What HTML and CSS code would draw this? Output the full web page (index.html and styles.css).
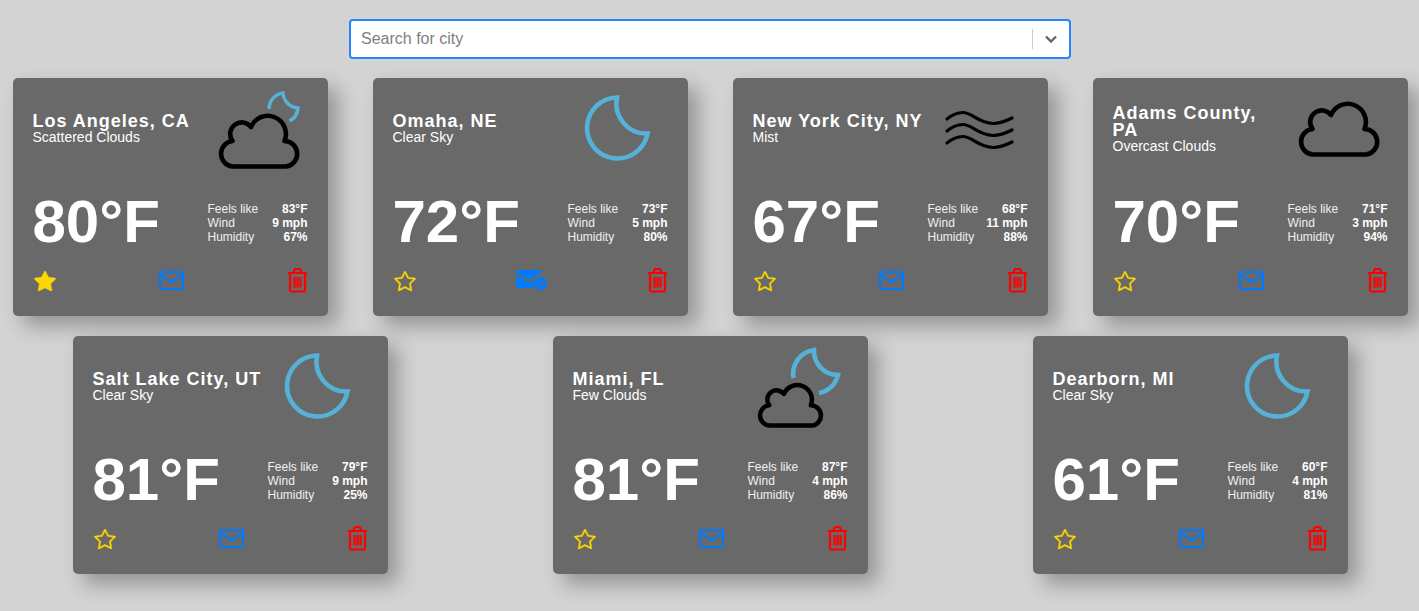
FILE: index.html
```html
<!DOCTYPE html>
<html lang="en">
<head>
  <meta charset="UTF-8" />
  <meta name="viewport" content="width=device-width, initial-scale=1.0" />
  <title>Weather Dashboard</title>
  <link rel="stylesheet" href="styles.css">
</head>
<body>

  <svg class="defs" width="0" height="0" aria-hidden="true">
    <defs>
      <path id="cloud" d="M17 54.500H70A12.800 12.800 0 0 0 68.500 29A17.500 17.500 0 0 0 35 15A10.500 10.500 0 0 0 16.500 29A12.800 12.800 0 0 0 17 54.500Z" />
      <path id="moon" d="M34 4A30.500 30.500 0 1 0 64.500 40A30 30 0 0 1 34 4Z" />
      <path id="star-fill" d="M3.612 15.443c-.386.198-.824-.149-.746-.592l.83-4.73L.173 6.765c-.329-.314-.158-.888.283-.95l4.898-.696L7.538.792c.197-.39.73-.39.927 0l2.184 4.327 4.898.696c.441.062.612.636.282.95l-3.522 3.356.83 4.73c.078.443-.36.79-.746.592L8 13.187l-4.389 2.256z" />
      <path id="star" d="M2.866 14.85c-.078.444.36.791.746.593l4.39-2.256 4.389 2.256c.386.198.824-.149.746-.592l-.83-4.73 3.522-3.356c.33-.314.16-.888-.282-.95l-4.898-.696L8.465.792a.513.513 0 0 0-.927 0L5.354 5.12l-4.898.696c-.441.062-.612.636-.283.95l3.523 3.356-.83 4.73zm4.905-2.767-3.686 1.894.694-3.957a.565.565 0 0 0-.163-.505L1.71 6.745l4.052-.576a.525.525 0 0 0 .393-.288L8 2.223l1.847 3.658a.525.525 0 0 0 .393.288l4.052.575-2.906 2.77a.565.565 0 0 0-.163.506l.694 3.957-3.686-1.894a.503.503 0 0 0-.461 0z" />
      <g id="mail">
        <rect x="1" y="1" width="23" height="17" rx="2" />
        <path d="M2 4L12.500 11.500L23 4" />
      </g>
      <g id="trash">
        <path d="M1 5H20M6.500 5L7.500 2A1.500 1.500 0 0 1 9 1H12A1.500 1.500 0 0 1 13.500 2L14.500 5" />
        <path d="M3 5V21.500A2 2 0 0 0 5 23.500H16A2 2 0 0 0 18 21.500V5" />
        <path d="M7.500 9V19.500M10.500 9V19.500M13.500 9V19.500" />
      </g>
    </defs>
  </svg>

  <div class="search">
    <span class="search-text">Search for city</span>
    <span class="search-sep"></span>
    <svg class="search-arrow" width="14" height="9" viewBox="0 0 14 9"><path d="M2 1.500L7 6.500L12 1.500" /></svg>
  </div>

  <div class="cards">

    <div class="card">
      <div class="card-top">
        <div class="place">
          <h2>Los Angeles, CA</h2>
          <p>Scattered Clouds</p>
        </div>
        <svg class="weather" viewBox="0 0 100 84">
          <path class="sky thin" d="M61 21A16 16 0 0 1 75 5A16 16 0 0 0 90 20A16 16 0 0 1 81.500 33" />
          <use class="dark" href="#cloud" transform="translate(8 24)" />
        </svg>
      </div>
      <div class="card-mid">
        <div class="temp">80°F</div>
        <dl class="stats">
          <dt>Feels like</dt><dd>83°F</dd>
          <dt>Wind</dt><dd>9 mph</dd>
          <dt>Humidity</dt><dd>67%</dd>
        </dl>
      </div>
      <div class="card-actions">
        <svg class="act-star" viewBox="-1 -1 18 18"><use href="#star-fill" /></svg>
        <svg class="act-mail" viewBox="0 0 25 19"><use href="#mail" /></svg>
        <svg class="act-trash" viewBox="0 0 21 25"><use href="#trash" /></svg>
      </div>
    </div>

    <div class="card">
      <div class="card-top">
        <div class="place">
          <h2>Omaha, NE</h2>
          <p>Clear Sky</p>
        </div>
        <svg class="weather" viewBox="0 0 100 84">
          <use class="sky" href="#moon" transform="translate(15 5.500)" />
        </svg>
      </div>
      <div class="card-mid">
        <div class="temp">72°F</div>
        <dl class="stats">
          <dt>Feels like</dt><dd>73°F</dd>
          <dt>Wind</dt><dd>5 mph</dd>
          <dt>Humidity</dt><dd>80%</dd>
        </dl>
      </div>
      <div class="card-actions">
        <svg class="act-star" viewBox="-1 -1 18 18"><use href="#star" /></svg>
        <svg class="act-sent" viewBox="0 0 32 21">
          <path class="sent-body" d="M2 0H23A2 2 0 0 1 25 2V2.500L12.500 10L0 2.500V2A2 2 0 0 1 2 0ZM0 5L12.500 12.500L25 5V17A1 1 0 0 1 24 18H2A2 2 0 0 1 0 16Z" />
          <circle class="sent-ring" cx="24.500" cy="13.500" r="7" />
          <path class="sent-check" d="M21.500 13.500L23.700 15.700L27.500 11.500" />
        </svg>
        <svg class="act-trash" viewBox="0 0 21 25"><use href="#trash" /></svg>
      </div>
    </div>

    <div class="card">
      <div class="card-top">
        <div class="place">
          <h2>New York City, NY</h2>
          <p>Mist</p>
        </div>
        <svg class="weather" viewBox="0 0 100 84">
          <g class="waves">
            <path d="M19 31C25 26 30 24.500 35 24.500C44 24.500 50 35 65 35.500C72 35.500 78 33 84 30" />
            <path d="M19 43C25 38 30 36.500 35 36.500C44 36.500 50 47 65 47.500C72 47.500 78 45 84 42" />
            <path d="M19 55C25 50 30 48.500 35 48.500C44 48.500 50 59 65 59.500C72 59.500 78 57 84 54" />
          </g>
        </svg>
      </div>
      <div class="card-mid">
        <div class="temp">67°F</div>
        <dl class="stats">
          <dt>Feels like</dt><dd>68°F</dd>
          <dt>Wind</dt><dd>11 mph</dd>
          <dt>Humidity</dt><dd>88%</dd>
        </dl>
      </div>
      <div class="card-actions">
        <svg class="act-star" viewBox="-1 -1 18 18"><use href="#star" /></svg>
        <svg class="act-mail" viewBox="0 0 25 19"><use href="#mail" /></svg>
        <svg class="act-trash" viewBox="0 0 21 25"><use href="#trash" /></svg>
      </div>
    </div>

    <div class="card">
      <div class="card-top">
        <div class="place">
          <h2>Adams County, PA</h2>
          <p>Overcast Clouds</p>
        </div>
        <svg class="weather" viewBox="0 0 100 84">
          <use class="dark" href="#cloud" transform="translate(8 12)" />
        </svg>
      </div>
      <div class="card-mid">
        <div class="temp">70°F</div>
        <dl class="stats">
          <dt>Feels like</dt><dd>71°F</dd>
          <dt>Wind</dt><dd>3 mph</dd>
          <dt>Humidity</dt><dd>94%</dd>
        </dl>
      </div>
      <div class="card-actions">
        <svg class="act-star" viewBox="-1 -1 18 18"><use href="#star" /></svg>
        <svg class="act-mail" viewBox="0 0 25 19"><use href="#mail" /></svg>
        <svg class="act-trash" viewBox="0 0 21 25"><use href="#trash" /></svg>
      </div>
    </div>

    <div class="card">
      <div class="card-top">
        <div class="place">
          <h2>Salt Lake City, UT</h2>
          <p>Clear Sky</p>
        </div>
        <svg class="weather" viewBox="0 0 100 84">
          <use class="sky" href="#moon" transform="translate(15 5.500)" />
        </svg>
      </div>
      <div class="card-mid">
        <div class="temp">81°F</div>
        <dl class="stats">
          <dt>Feels like</dt><dd>79°F</dd>
          <dt>Wind</dt><dd>9 mph</dd>
          <dt>Humidity</dt><dd>25%</dd>
        </dl>
      </div>
      <div class="card-actions">
        <svg class="act-star" viewBox="-1 -1 18 18"><use href="#star" /></svg>
        <svg class="act-mail" viewBox="0 0 25 19"><use href="#mail" /></svg>
        <svg class="act-trash" viewBox="0 0 21 25"><use href="#trash" /></svg>
      </div>
    </div>

    <div class="card">
      <div class="card-top">
        <div class="place">
          <h2>Miami, FL</h2>
          <p>Few Clouds</p>
        </div>
        <svg class="weather" viewBox="0 0 100 84">
          <path class="sky" d="M45.500 32A24 24 0 0 1 66 4A24 24 0 0 0 90 29A24 24 0 0 1 71 47" />
          <use class="dark small" href="#cloud" transform="translate(8 36) scale(.8)" />
        </svg>
      </div>
      <div class="card-mid">
        <div class="temp">81°F</div>
        <dl class="stats">
          <dt>Feels like</dt><dd>87°F</dd>
          <dt>Wind</dt><dd>4 mph</dd>
          <dt>Humidity</dt><dd>86%</dd>
        </dl>
      </div>
      <div class="card-actions">
        <svg class="act-star" viewBox="-1 -1 18 18"><use href="#star" /></svg>
        <svg class="act-mail" viewBox="0 0 25 19"><use href="#mail" /></svg>
        <svg class="act-trash" viewBox="0 0 21 25"><use href="#trash" /></svg>
      </div>
    </div>

    <div class="card">
      <div class="card-top">
        <div class="place">
          <h2>Dearborn, MI</h2>
          <p>Clear Sky</p>
        </div>
        <svg class="weather" viewBox="0 0 100 84">
          <use class="sky" href="#moon" transform="translate(15 5.500)" />
        </svg>
      </div>
      <div class="card-mid">
        <div class="temp">61°F</div>
        <dl class="stats">
          <dt>Feels like</dt><dd>60°F</dd>
          <dt>Wind</dt><dd>4 mph</dd>
          <dt>Humidity</dt><dd>81%</dd>
        </dl>
      </div>
      <div class="card-actions">
        <svg class="act-star" viewBox="-1 -1 18 18"><use href="#star" /></svg>
        <svg class="act-mail" viewBox="0 0 25 19"><use href="#mail" /></svg>
        <svg class="act-trash" viewBox="0 0 21 25"><use href="#trash" /></svg>
      </div>
    </div>

  </div>

</body>
</html>
```

FILE: styles.css
```css
* {
  box-sizing: border-box;
}

html, body {
  height: 100%;
  overflow: hidden;
}

body {
  font-family: "Liberation Sans", Arial, sans-serif;
  margin: 0;
  padding: 19px 0 0;
  background: #d3d3d3;
  color: #fff;
}

.defs {
  display: block;
  height: 0;
}

.search {
  width: 722px;
  height: 40px;
  margin: 0 0 19px 349px;
  padding: 0 11px 0 10px;
  display: flex;
  align-items: center;
  background: #fff;
  border: 2px solid #2684ff;
  border-radius: 4px;
}

.search-text {
  flex: 1;
  font-size: 16px;
  color: #808080;
}

.search-sep {
  width: 1px;
  height: 20px;
  margin-right: 11px;
  background: #ccc;
}

.search-arrow path {
  fill: none;
  stroke: #666;
  stroke-width: 2.4;
}

.cards {
  width: 1440px;
  margin-left: -10px;
  display: flex;
  flex-wrap: wrap;
  justify-content: space-around;
  row-gap: 20px;
}

.card {
  width: 315px;
  height: 238px;
  padding: 10px 20px 0;
  background: #696969;
  border-radius: 5px;
  box-shadow: 10px 10px 20px rgba(0, 0, 0, 0.3);
}

.card-top {
  display: flex;
  align-items: center;
  height: 84px;
}

.place {
  flex: 1;
  min-width: 0;
  margin-bottom: 2px;
}

.place h2 {
  margin: 0;
  font-size: 18px;
  line-height: 17px;
  letter-spacing: 1px;
  font-weight: bold;
}

.place p {
  margin: 0;
  font-size: 14px;
  line-height: 15px;
}

.weather {
  width: 100px;
  height: 84px;
  flex: none;
  overflow: visible;
}

.sky, .dark, .waves path {
  fill: none;
}

.sky {
  stroke: #55b1d6;
  stroke-width: 4.6;
  stroke-miterlimit: 3;
}

.sky.thin {
  stroke-width: 3.6;
}

.dark {
  stroke: #000;
  stroke-width: 4.6;
  stroke-linejoin: round;
}

.dark.small {
  stroke-width: 5.6;
}

.waves path {
  stroke: #000;
  stroke-width: 3.2;
  stroke-linecap: round;
}

.card-mid {
  display: flex;
  align-items: center;
  justify-content: space-between;
  margin-top: 20px;
  height: 60px;
}

.temp {
  font-size: 60px;
  font-weight: bold;
  line-height: 60px;
}

.stats {
  width: 100px;
  margin: 2px 0 0;
  display: grid;
  grid-template-columns: 1fr auto;
  font-size: 12px;
  line-height: 14px;
}

.stats dt {
  color: #f0f0f0;
}

.stats dd {
  margin: 0;
  font-weight: bold;
  text-align: right;
}

.card-actions {
  display: flex;
  align-items: center;
  justify-content: space-between;
  margin-top: 16px;
  height: 25px;
}

.act-star {
  width: 24px;
  height: 24px;
  fill: #ffd700;
  stroke: #ffd700;
  stroke-width: 0.3;
}

.act-mail {
  width: 25px;
  height: 19px;
  fill: none;
  stroke: #007bff;
  stroke-width: 2.2;
}

.act-sent {
  width: 32px;
  height: 21px;
}

.sent-body {
  fill: #007bff;
}

.sent-ring {
  fill: #007bff;
  stroke: #696969;
  stroke-width: 1.2;
}

.sent-check {
  fill: none;
  stroke: #696969;
  stroke-width: 1.4;
}

.act-trash {
  width: 21px;
  height: 25px;
  fill: none;
  stroke: #f00;
  stroke-width: 2.2;
}
```
